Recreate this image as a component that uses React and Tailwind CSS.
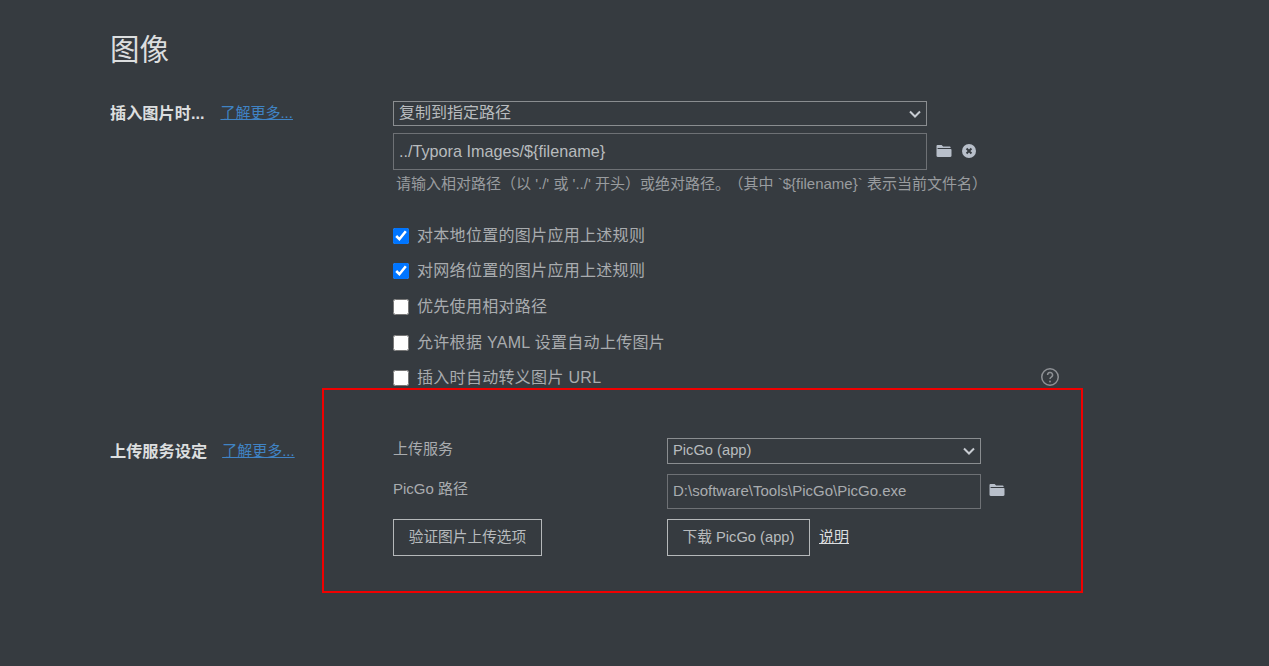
import React from "react";

function Folder({ className }) {
  return (
    <svg viewBox="0 0 16 14" className={className} fill="#b8bfca">
      <path d="M1.4 1h4.2l1.5 1.6h6.6c.5 0 .9.4.9.9v.6H1.6V5h13.2c.3 0 .7.3.7.8v6c0 .7-.5 1.2-1.2 1.2H1.7C1 13 .5 12.5.5 11.8V1.9C.5 1.4.9 1 1.4 1z" />
    </svg>
  );
}

function Chevron() {
  return (
    <svg viewBox="0 0 12 8" className="pointer-events-none absolute right-[6px] top-1/2 h-[8px] w-[12px] -translate-y-1/2" fill="none" stroke="#c8ccd2" strokeWidth="2">
      <path d="M1 1.5l5 5 5-5" />
    </svg>
  );
}

function Select({ value, className, textClass }) {
  return (
    <div className={`relative ${className}`}>
      <select defaultValue={value} className={`h-full w-full appearance-none rounded-none border border-[#8a8d90] bg-transparent pb-[1px] pl-[5px] leading-none text-[#b8bbbe] outline-none ${textClass}`}>
        <option>{value}</option>
      </select>
      <Chevron />
    </div>
  );
}

function Check({ label, checked, className = "" }) {
  return (
    <label className={`flex items-center gap-2 text-[16px] leading-none text-[#a9acaf] ${className}`}>
      <input type="checkbox" defaultChecked={checked} className="m-0 h-4 w-4 shrink-0" />
      <span className="tracking-[0.3px]">{label}</span>
    </label>
  );
}

export default function App() {
  return (
    <div
      className="relative h-[666px] w-[1269px] overflow-hidden bg-[#363b40] pl-[110px] pt-[32px] text-[#b8bbbe]"
      style={{ fontFamily: '"Liberation Sans", "Noto Sans CJK SC", sans-serif' }}
    >
      <h1 className="h-[36px] text-[29.5px] leading-[36px] font-normal text-[#dcdedf]">图像</h1>

      <div className="mt-[33px] flex">
        <div className="flex w-[283px] items-start pt-[1px]">
          <span className="text-[16.2px] leading-[22px] font-bold text-[#dcdedf]">插入图片时...</span>
          <a className="ml-[16px] text-[15px] leading-[22px] text-[#4083c4] underline">了解更多...</a>
        </div>
        <div className="flex flex-col">
          <Select value="复制到指定路径" className="h-[25px] w-[534px]" textClass="text-[16px]" />
          <div className="mt-[7px] flex items-center">
            <input
              readOnly
              value="../Typora Images/${filename}"
              className="h-[37px] w-[534px] border border-[#6e7175] bg-transparent pl-[5px] text-[16.2px] text-[#b8bbbe] outline-none"
            />
            <Folder className="mb-[2px] ml-[9px] h-[14px] w-[16px]" />
            <svg viewBox="0 0 16 16" className="mb-[2px] ml-[10px] h-[14px] w-[14px]">
              <circle cx="8" cy="8" r="8" fill="#b8bfca" />
              <path d="M5.2 5.2l5.6 5.6M10.8 5.2l-5.6 5.6" stroke="#363b40" strokeWidth="2.2" />
            </svg>
          </div>
          <p className="mt-[4px] pl-[3px] text-[15px] leading-[20px] text-[#999c9f]">
            请输入相对路径（以 './' 或 '../' 开头）或绝对路径。<span className="ml-[6px]">（其中 `${"{"}filename{"}"}` 表示当前文件名）</span>
          </p>
          <div className="mt-[33.5px] flex w-[666px] flex-col gap-[19.7px]">
            <Check checked label="对本地位置的图片应用上述规则" />
            <Check checked label="对网络位置的图片应用上述规则" />
            <Check label="优先使用相对路径" />
            <Check label="允许根据 YAML 设置自动上传图片" />
            <div className="flex h-4 items-center justify-between">
              <Check label="插入时自动转义图片 URL" />
              <svg viewBox="0 0 24 24" className="mb-[2px] h-[18px] w-[18px] shrink-0" fill="none" stroke="#8e9195" strokeWidth="2">
                <circle cx="12" cy="12" r="11" />
                <path d="M8.8 9.2a3.3 3.3 0 1 1 4.9 2.9c-1 .6-1.7 1.2-1.7 2.6" />
                <circle cx="12" cy="18" r="1.2" fill="#8e9195" stroke="none" />
              </svg>
            </div>
          </div>
        </div>
      </div>

      <div className="mt-[51.7px] flex">
        <div className="flex w-[283px] items-start pt-[2px]">
          <span className="text-[16.2px] leading-[22px] font-bold text-[#dcdedf]">上传服务设定</span>
          <a className="ml-[15px] text-[15px] leading-[22px] text-[#4083c4] underline">了解更多...</a>
        </div>
        <div className="grid grid-cols-[274px_1fr]">
          <div className="-mt-[1px] text-[15px] leading-[24px] text-[#a9acaf]">上传服务</div>
          <Select value="PicGo (app)" className="h-[26px] w-[314px]" textClass="text-[14.7px]" />
          <div className="mt-[13px] text-[15px] leading-[24px] text-[#a9acaf]">PicGo 路径</div>
          <div className="mt-[10px] flex items-center">
            <input
              readOnly
              value="D:\software\Tools\PicGo\PicGo.exe"
              className="h-[35px] w-[314px] border border-[#6e7175] bg-transparent pb-[1px] pl-[5px] text-[15px] text-[#a9acaf] outline-none"
            />
            <Folder className="mb-[2px] ml-[8px] h-[14px] w-[16px]" />
          </div>
          <div className="mt-[10px]">
            <button className="h-[37px] w-[149px] border border-[#b5b8ba] text-[14.7px] text-[#b8bbbe]">验证图片上传选项</button>
          </div>
          <div className="mt-[10px] flex items-center">
            <button className="h-[37px] w-[143px] border border-[#b5b8ba] text-[14.7px] text-[#b8bbbe]">下载 PicGo (app)</button>
            <a className="ml-[9px] text-[15px] text-[#dcdedf] underline">说明</a>
          </div>
        </div>
      </div>

      <div className="pointer-events-none absolute left-[322px] top-[388px] h-[205px] w-[761px] border-2 border-[#f00000]" />
    </div>
  );
}
